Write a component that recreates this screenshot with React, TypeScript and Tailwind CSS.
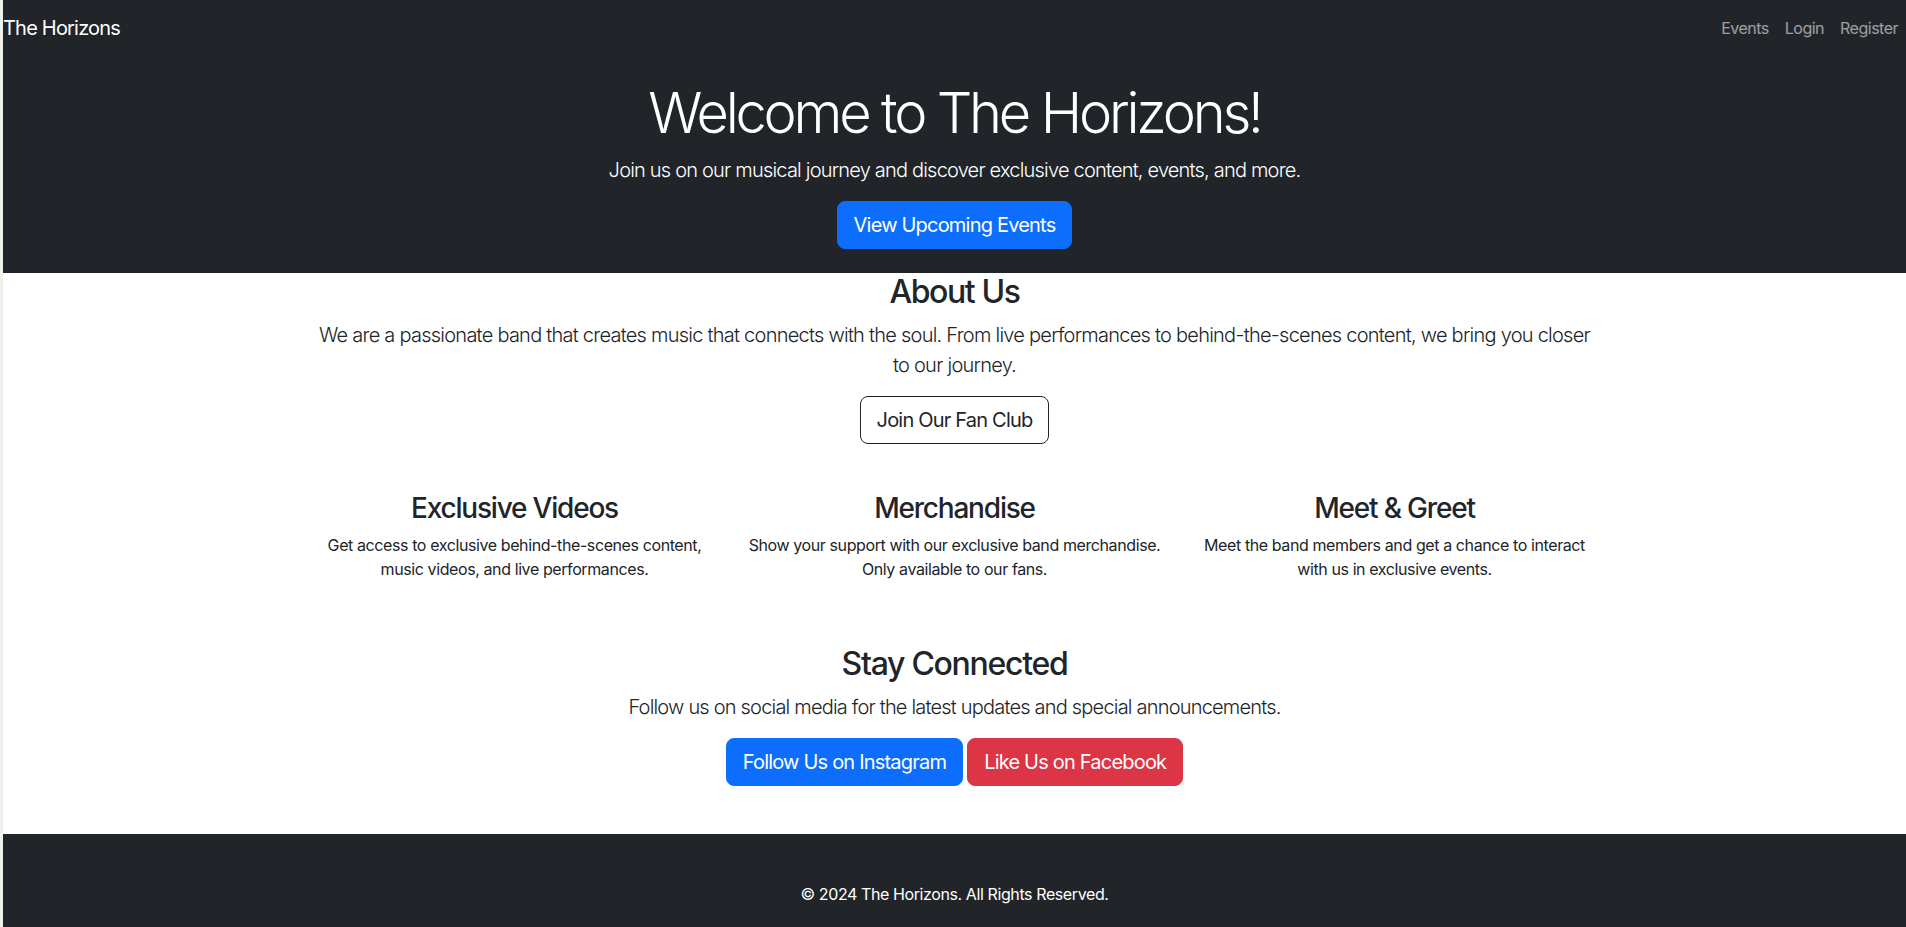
import React from "react";

const font = { fontFamily: "Inter, 'Noto Sans', 'Liberation Sans', sans-serif" };

function Feature({ title, lines }: { title: string; lines: string[] }) {
  return (
    <div className="flex flex-col items-center text-center px-2">
      <h3 className="text-[28px] leading-[1.2] font-medium mb-2 tracking-[-1.2px]">{title}</h3>
      <p className="text-[16px] leading-6 mb-4 tracking-[-0.4px] whitespace-nowrap">
        {lines[0]}
        <br />
        {lines[1]}
      </p>
    </div>
  );
}

export default function App() {
  return (
    <div className="min-h-screen bg-[#f1f0eb] pl-[3px]" style={font}>
      <div className="bg-white text-[#212529]">
        <nav className="bg-[#212529] h-14 flex items-center justify-between">
          <a className="text-white text-[20px] leading-[30px] tracking-[-0.8px]">The Horizons</a>
          <div className="flex items-center">
            <a className="px-2 text-[16px] leading-6 text-white/55 tracking-[-0.5px]">Events</a>
            <a className="px-2 text-[16px] leading-6 text-white/55 tracking-[-0.5px]">Login</a>
            <a className="px-2 text-[16px] leading-6 text-white/55 tracking-[-0.5px]">Register</a>
          </div>
        </nav>

        <header className="bg-[#212529] text-white flex flex-col items-center text-center py-6">
          <h1 className="text-[56px] leading-[1.2] font-light mb-2 tracking-[-3.2px]">
            Welcome to The Horizons!
          </h1>
          <p className="text-[20px] leading-[30px] font-light mb-4 tracking-[-0.8px]">
            Join us on our musical journey and discover exclusive content, events, and more.
          </p>
          <button className="bg-[#0d6efd] text-white text-[20px] leading-[30px] px-4 py-2 rounded-lg border border-[#0d6efd] tracking-[-0.8px]">
            View Upcoming Events
          </button>
        </header>

        <main className="w-[1320px] mx-auto px-3 flex flex-col items-center text-center">
          <h2 className="text-[32px] leading-[1.2] font-medium mb-2 tracking-[-1.4px]">About Us</h2>
          <p className="text-[20px] leading-[30px] font-light mb-4 tracking-[-0.75px]">
            We are a passionate band that creates music that connects with the soul. From live performances to behind-the-scenes content, we bring you closer
            <br />
            to our journey.
          </p>
          <button className="text-[20px] leading-[30px] px-4 py-2 rounded-lg border border-[#212529] text-[#212529] tracking-[-0.8px]">
            Join Our Fan Club
          </button>

          <div className="grid grid-cols-3 w-[1320px] mt-12">
            <Feature
              title="Exclusive Videos"
              lines={["Get access to exclusive behind-the-scenes content,", "music videos, and live performances."]}
            />
            <Feature
              title="Merchandise"
              lines={["Show your support with our exclusive band merchandise.", "Only available to our fans."]}
            />
            <Feature
              title="Meet & Greet"
              lines={["Meet the band members and get a chance to interact", "with us in exclusive events."]}
            />
          </div>

          <h2 className="text-[32px] leading-[1.2] font-medium mb-2 mt-12 tracking-[-1.3px]">Stay Connected</h2>
          <p className="text-[20px] leading-[30px] font-light mb-4 tracking-[-0.8px]">
            Follow us on social media for the latest updates and special announcements.
          </p>
          <div className="flex gap-1 mb-12">
            <button className="bg-[#0d6efd] text-white text-[20px] leading-[30px] px-4 py-2 rounded-lg border border-[#0d6efd] tracking-[-0.8px]">
              Follow Us on Instagram
            </button>
            <button className="bg-[#dc3545] text-white text-[20px] leading-[30px] px-4 py-2 rounded-lg border border-[#dc3545] tracking-[-0.8px]">
              Like Us on Facebook
            </button>
          </div>
        </main>

        <footer className="bg-[#212529] text-white text-center pt-12 pb-12">
          <p className="text-[16px] leading-6 tracking-[-0.4px]">© 2024 The Horizons. All Rights Reserved.</p>
        </footer>
      </div>
    </div>
  );
}
